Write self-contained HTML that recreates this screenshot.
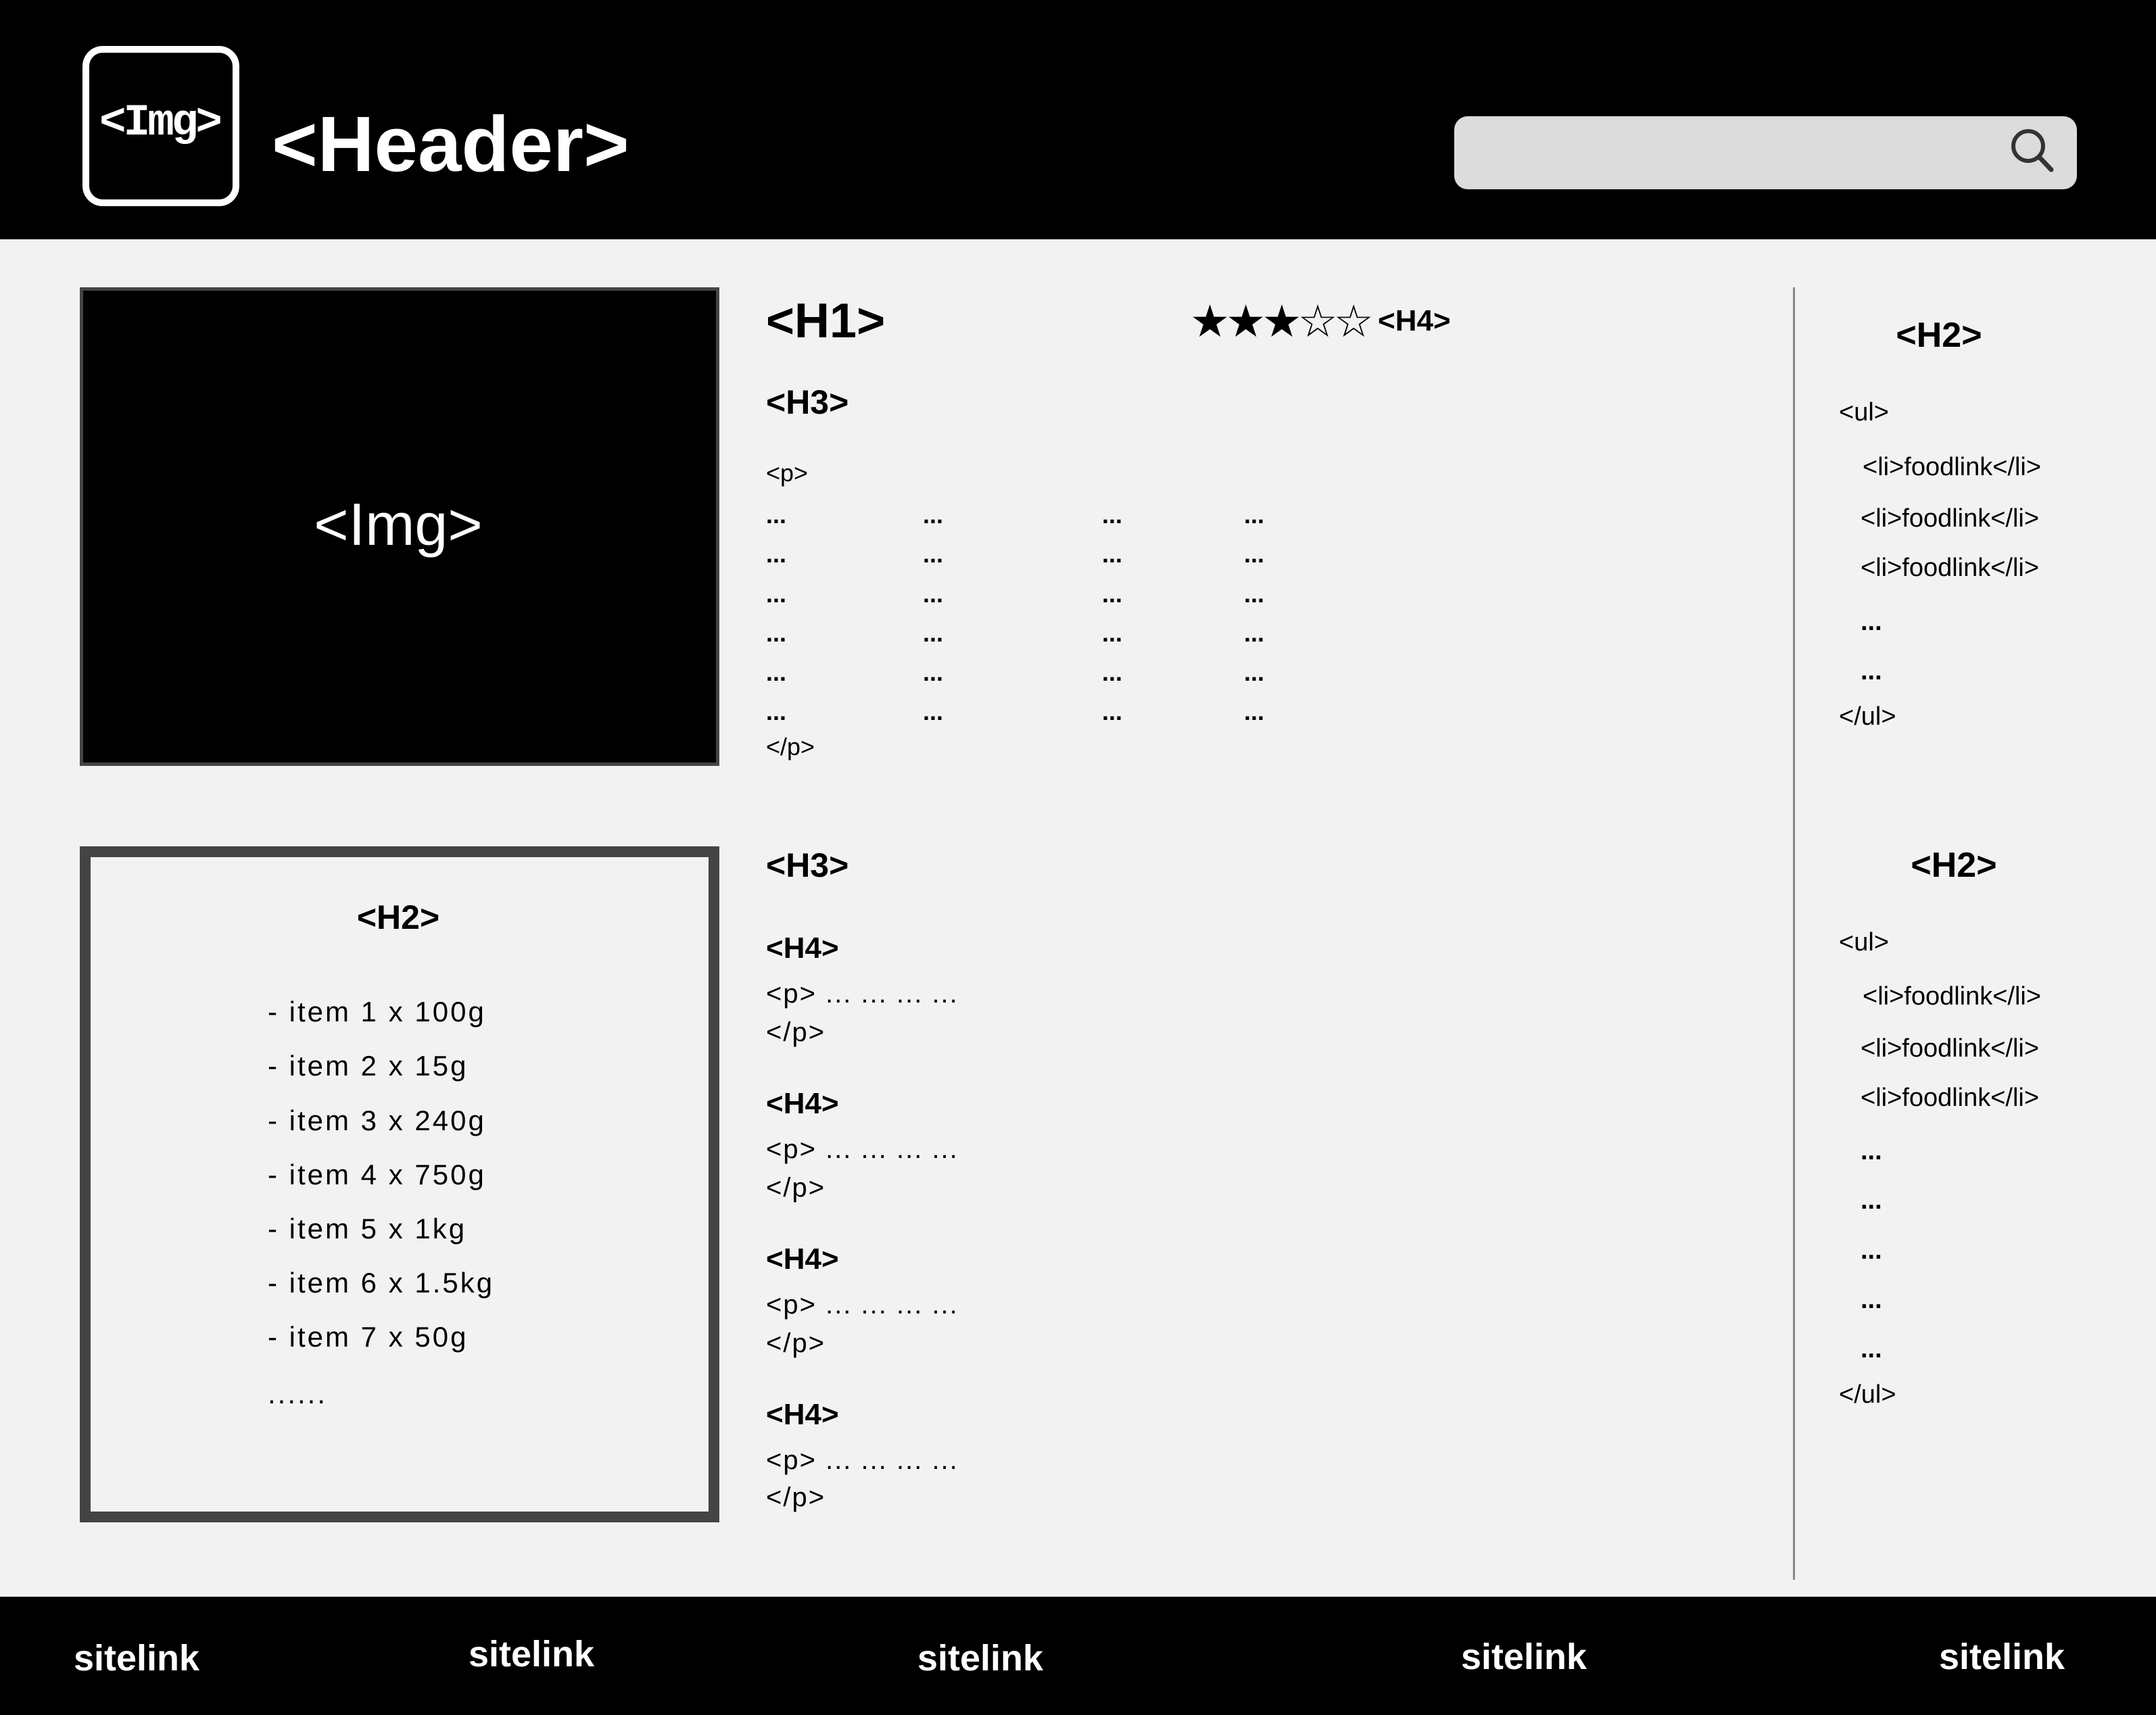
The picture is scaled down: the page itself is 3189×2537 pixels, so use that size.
<!DOCTYPE html>
<html><head><meta charset="utf-8"><style>
*{margin:0;padding:0;box-sizing:border-box}
body{width:3189px;height:2537px;background:#f2f2f2;position:relative;overflow:hidden;font-family:"Liberation Sans",sans-serif;color:#000}
.t{position:absolute;line-height:1;transform:translateY(-50%);white-space:nowrap}
.c{transform:translate(-50%,-50%)}
.b{font-weight:bold}
.s36{font-size:36px}.s40{font-size:40px;letter-spacing:2px}
.li{font-size:38px}
.it{font-size:42px;letter-spacing:3px}
</style></head><body>
<div style="position:absolute;left:0;top:0;width:3189px;height:354px;background:#000"></div>
<div style="position:absolute;left:122px;top:68px;width:232px;height:237px;border:10px solid #fff;border-radius:30px"></div>
<div class="t c b" style="left:236px;top:182px;color:#fff;font-size:66px;font-family:'Liberation Mono',monospace;letter-spacing:-4px">&lt;Img&gt;</div>
<div class="t b" style="left:402px;top:213px;color:#fff;font-size:116px">&lt;Header&gt;</div>
<div style="position:absolute;left:2151px;top:172px;width:921px;height:108px;background:#dcdcdc;border-radius:20px"></div>
<svg style="position:absolute;left:2960px;top:180px" width="80" height="80" viewBox="2960 180 80 80"><circle cx="3000" cy="216" r="22" fill="none" stroke="#333" stroke-width="6"/><line x1="3016" y1="232" x2="3034" y2="251" stroke="#333" stroke-width="7" stroke-linecap="round"/></svg>

<div style="position:absolute;left:118px;top:425px;width:946px;height:708px;background:#000;border:5px solid #444"></div>
<div class="t c" style="left:589px;top:776px;color:#fff;font-size:88px">&lt;Img&gt;</div>

<div style="position:absolute;left:118px;top:1252px;width:946px;height:1000px;border:16px solid #444"></div>
<div class="t c b" style="left:589px;top:1357px;font-size:50px">&lt;H2&gt;</div>
<div class="t it" style="left:396px;top:1497px">- item 1 x 100g</div>
<div class="t it" style="left:396px;top:1577px">- item 2 x 15g</div>
<div class="t it" style="left:396px;top:1658px">- item 3 x 240g</div>
<div class="t it" style="left:396px;top:1738px">- item 4 x 750g</div>
<div class="t it" style="left:396px;top:1818px">- item 5 x 1kg</div>
<div class="t it" style="left:396px;top:1898px">- item 6 x 1.5kg</div>
<div class="t it" style="left:396px;top:1978px">- item 7 x 50g</div>
<div class="t it" style="left:396px;top:2062px">......</div>

<div class="t b" style="left:1133px;top:475px;font-size:72px">&lt;H1&gt;</div>
<div class="t" style="left:1760px;top:475px;font-size:66px;letter-spacing:-6px">★★★☆☆</div>
<div class="t b" style="left:2038px;top:475px;font-size:44px">&lt;H4&gt;</div>
<div class="t b" style="left:1133px;top:595px;font-size:50px">&lt;H3&gt;</div>
<div class="t s36" style="left:1133px;top:700px">&lt;p&gt;</div>
<div style="position:absolute;left:0;top:0;font-weight:bold">
<div class="t s36" style="left:1133px;top:762px">...</div><div class="t s36" style="left:1365px;top:762px">...</div><div class="t s36" style="left:1630px;top:762px">...</div><div class="t s36" style="left:1840px;top:762px">...</div>
<div class="t s36" style="left:1133px;top:820px">...</div><div class="t s36" style="left:1365px;top:820px">...</div><div class="t s36" style="left:1630px;top:820px">...</div><div class="t s36" style="left:1840px;top:820px">...</div>
<div class="t s36" style="left:1133px;top:879px">...</div><div class="t s36" style="left:1365px;top:879px">...</div><div class="t s36" style="left:1630px;top:879px">...</div><div class="t s36" style="left:1840px;top:879px">...</div>
<div class="t s36" style="left:1133px;top:937px">...</div><div class="t s36" style="left:1365px;top:937px">...</div><div class="t s36" style="left:1630px;top:937px">...</div><div class="t s36" style="left:1840px;top:937px">...</div>
<div class="t s36" style="left:1133px;top:995px">...</div><div class="t s36" style="left:1365px;top:995px">...</div><div class="t s36" style="left:1630px;top:995px">...</div><div class="t s36" style="left:1840px;top:995px">...</div>
<div class="t s36" style="left:1133px;top:1053px">...</div><div class="t s36" style="left:1365px;top:1053px">...</div><div class="t s36" style="left:1630px;top:1053px">...</div><div class="t s36" style="left:1840px;top:1053px">...</div>
</div>
<div class="t s36" style="left:1133px;top:1105px">&lt;/p&gt;</div>

<div class="t b" style="left:1133px;top:1280px;font-size:50px">&lt;H3&gt;</div>
<div class="t b" style="left:1133px;top:1403px;font-size:44px">&lt;H4&gt;</div>
<div class="t s40" style="left:1133px;top:1470px">&lt;p&gt; ... ... ... ...</div>
<div class="t s40" style="left:1133px;top:1527px">&lt;/p&gt;</div>
<div class="t b" style="left:1133px;top:1633px;font-size:44px">&lt;H4&gt;</div>
<div class="t s40" style="left:1133px;top:1700px">&lt;p&gt; ... ... ... ...</div>
<div class="t s40" style="left:1133px;top:1757px">&lt;/p&gt;</div>
<div class="t b" style="left:1133px;top:1863px;font-size:44px">&lt;H4&gt;</div>
<div class="t s40" style="left:1133px;top:1930px">&lt;p&gt; ... ... ... ...</div>
<div class="t s40" style="left:1133px;top:1987px">&lt;/p&gt;</div>
<div class="t b" style="left:1133px;top:2093px;font-size:44px">&lt;H4&gt;</div>
<div class="t s40" style="left:1133px;top:2160px">&lt;p&gt; ... ... ... ...</div>
<div class="t s40" style="left:1133px;top:2215px">&lt;/p&gt;</div>

<div style="position:absolute;left:2652px;top:425px;width:3px;height:1912px;background:#888"></div>

<div class="t c b" style="left:2868px;top:496px;font-size:52px">&lt;H2&gt;</div>
<div class="t li" style="left:2720px;top:610px">&lt;ul&gt;</div>
<div class="t li" style="left:2755px;top:691px">&lt;li&gt;foodlink&lt;/li&gt;</div>
<div class="t li" style="left:2752px;top:767px">&lt;li&gt;foodlink&lt;/li&gt;</div>
<div class="t li" style="left:2752px;top:840px">&lt;li&gt;foodlink&lt;/li&gt;</div>
<div class="t li b" style="left:2752px;top:920px">...</div>
<div class="t li b" style="left:2752px;top:993px">...</div>
<div class="t li" style="left:2720px;top:1060px">&lt;/ul&gt;</div>

<div class="t c b" style="left:2890px;top:1280px;font-size:52px">&lt;H2&gt;</div>
<div class="t li" style="left:2720px;top:1394px">&lt;ul&gt;</div>
<div class="t li" style="left:2755px;top:1474px">&lt;li&gt;foodlink&lt;/li&gt;</div>
<div class="t li" style="left:2752px;top:1551px">&lt;li&gt;foodlink&lt;/li&gt;</div>
<div class="t li" style="left:2752px;top:1624px">&lt;li&gt;foodlink&lt;/li&gt;</div>
<div class="t li b" style="left:2752px;top:1703px">...</div>
<div class="t li b" style="left:2752px;top:1776px">...</div>
<div class="t li b" style="left:2752px;top:1850px">...</div>
<div class="t li b" style="left:2752px;top:1923px">...</div>
<div class="t li b" style="left:2752px;top:1996px">...</div>
<div class="t li" style="left:2720px;top:2063px">&lt;/ul&gt;</div>

<div style="position:absolute;left:0;top:2362px;width:3189px;height:175px;background:#000"></div>
<div class="t c b" style="left:202px;top:2453px;color:#fff;font-size:54px">sitelink</div>
<div class="t c b" style="left:786px;top:2447px;color:#fff;font-size:54px">sitelink</div>
<div class="t c b" style="left:1450px;top:2453px;color:#fff;font-size:54px">sitelink</div>
<div class="t c b" style="left:2254px;top:2451px;color:#fff;font-size:54px">sitelink</div>
<div class="t c b" style="left:2961px;top:2451px;color:#fff;font-size:54px">sitelink</div>
</body></html>
